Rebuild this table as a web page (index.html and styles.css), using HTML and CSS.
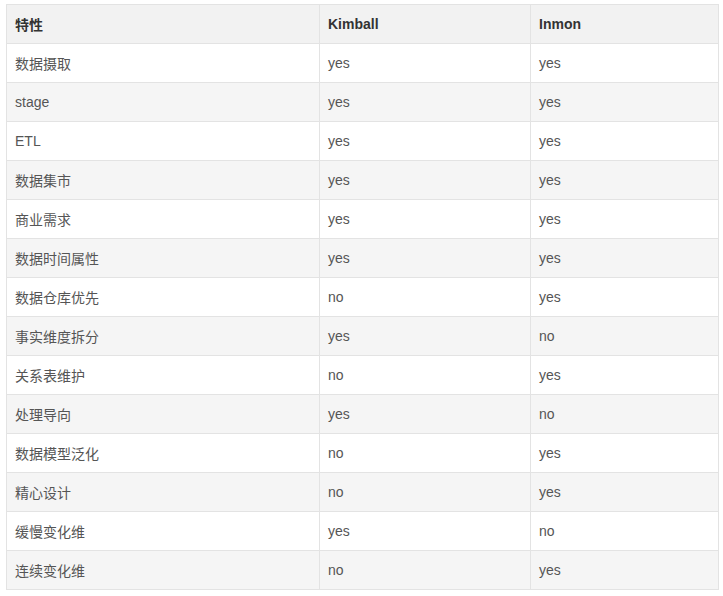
FILE: index.html
```html
<!DOCTYPE html>
<html lang="zh">
<head>
<meta charset="utf-8">
<link rel="stylesheet" href="styles.css">
</head>
<body>
<div class="wrap">
<table class="cmp">
<colgroup><col class="c1"><col class="c2"><col class="c3"></colgroup>
<thead>
<tr><th>特性</th><th>Kimball</th><th>Inmon</th></tr>
</thead>
<tbody>
<tr><td>数据摄取</td><td>yes</td><td>yes</td></tr>
<tr><td>stage</td><td>yes</td><td>yes</td></tr>
<tr><td>ETL</td><td>yes</td><td>yes</td></tr>
<tr><td>数据集市</td><td>yes</td><td>yes</td></tr>
<tr><td>商业需求</td><td>yes</td><td>yes</td></tr>
<tr><td>数据时间属性</td><td>yes</td><td>yes</td></tr>
<tr><td>数据仓库优先</td><td>no</td><td>yes</td></tr>
<tr><td>事实维度拆分</td><td>yes</td><td>no</td></tr>
<tr><td>关系表维护</td><td>no</td><td>yes</td></tr>
<tr><td>处理导向</td><td>yes</td><td>no</td></tr>
<tr><td>数据模型泛化</td><td>no</td><td>yes</td></tr>
<tr><td>精心设计</td><td>no</td><td>yes</td></tr>
<tr><td>缓慢变化维</td><td>yes</td><td>no</td></tr>
<tr><td>连续变化维</td><td>no</td><td>yes</td></tr>
</tbody>
</table>
</div>
</body>
</html>
```
FILE: styles.css
```css
html, body {
  margin: 0;
  padding: 0;
  background: #fff;
}
.wrap {
  padding: 4px 5px 0 6px;
}
.cmp {
  border-collapse: collapse;
  width: 712px;
  table-layout: fixed;
  font-family: "Liberation Sans", "Noto Sans CJK SC", sans-serif;
  font-size: 14px;
}
.c1 { width: 313px; }
.c2 { width: 211px; }
.c3 { width: 188px; }
.cmp th, .cmp td {
  border: 1px solid #e3e3e3;
  height: 39px;
  padding: 0 8px;
  box-sizing: border-box;
  text-align: left;
  vertical-align: middle;
}
.cmp th {
  background: #f2f2f2;
  color: #333;
  font-weight: bold;
}
.cmp td {
  color: #555;
}
.cmp tbody tr:nth-child(even) td {
  background: #f5f5f5;
}
```
